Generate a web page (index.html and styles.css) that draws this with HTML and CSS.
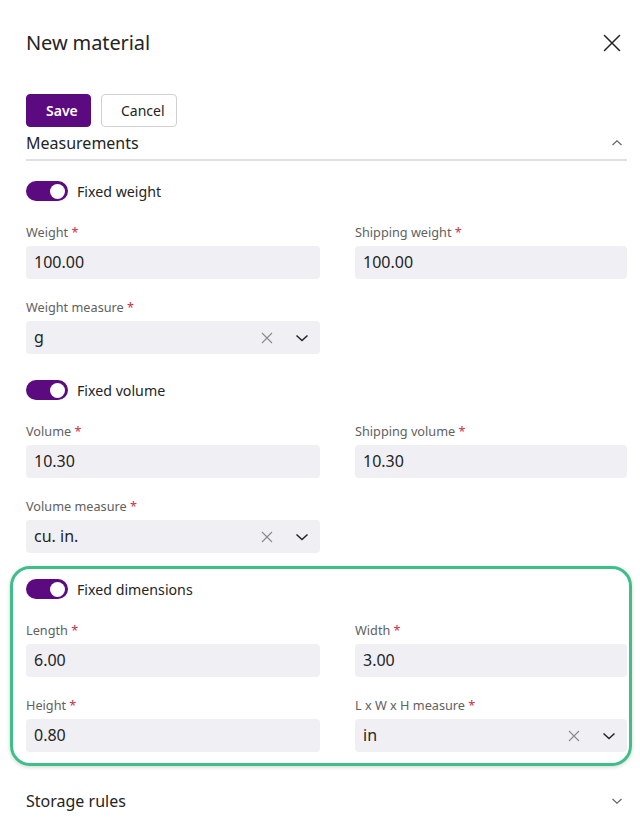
FILE: index.html
```html
<!DOCTYPE html>
<html>
<head>
<meta charset="utf-8">
<link rel="stylesheet" href="styles.css">
</head>
<body>
<div class="page">
  <header class="header">
    <h1 class="title">New material</h1>
    <svg class="close" width="18" height="18" viewBox="0 0 18 18"><path d="M1.5 1.5 L16.5 16.5 M16.5 1.5 L1.5 16.5" stroke="#242424" stroke-width="1.5" fill="none" stroke-linecap="round"/></svg>
  </header>
  <div class="actions">
    <button class="btn primary">Save</button>
    <button class="btn">Cancel</button>
  </div>
  <div class="section-head open">
    <span>Measurements</span>
    <svg width="12" height="8" viewBox="0 0 12 8"><path d="M1.5 6 L6 1.8 L10.5 6" stroke="#616161" stroke-width="1.1" fill="none"/></svg>
  </div>

  <div class="group">
    <div class="switch-row"><span class="switch"><span class="knob"></span></span><span>Fixed weight</span></div>
    <div class="grid">
      <div class="field"><label>Weight <b>*</b></label><div class="input">100.00</div></div>
      <div class="field"><label>Shipping weight <b>*</b></label><div class="input">100.00</div></div>
      <div class="field"><label>Weight measure <b>*</b></label><div class="input select"><span class="val">g</span>
        <svg class="x" width="12" height="12" viewBox="0 0 12 12"><path d="M1 1 L11 11 M11 1 L1 11" stroke="#8a8a8a" stroke-width="1.1"/></svg>
        <svg class="chev" width="14" height="8" viewBox="0 0 14 8"><path d="M1.5 1.5 L7 6.5 L12.5 1.5" stroke="#242424" stroke-width="1.5" fill="none"/></svg></div></div>
    </div>
  </div>

  <div class="group">
    <div class="switch-row"><span class="switch"><span class="knob"></span></span><span>Fixed volume</span></div>
    <div class="grid">
      <div class="field"><label>Volume <b>*</b></label><div class="input">10.30</div></div>
      <div class="field"><label>Shipping volume <b>*</b></label><div class="input">10.30</div></div>
      <div class="field"><label>Volume measure <b>*</b></label><div class="input select"><span class="val">cu. in.</span>
        <svg class="x" width="12" height="12" viewBox="0 0 12 12"><path d="M1 1 L11 11 M11 1 L1 11" stroke="#8a8a8a" stroke-width="1.1"/></svg>
        <svg class="chev" width="14" height="8" viewBox="0 0 14 8"><path d="M1.5 1.5 L7 6.5 L12.5 1.5" stroke="#242424" stroke-width="1.5" fill="none"/></svg></div></div>
    </div>
  </div>

  <div class="group highlight">
    <div class="switch-row"><span class="switch"><span class="knob"></span></span><span>Fixed dimensions</span></div>
    <div class="grid">
      <div class="field"><label>Length <b>*</b></label><div class="input">6.00</div></div>
      <div class="field"><label>Width <b>*</b></label><div class="input">3.00</div></div>
      <div class="field"><label>Height <b>*</b></label><div class="input">0.80</div></div>
      <div class="field"><label>L x W x H measure <b>*</b></label><div class="input select"><span class="val">in</span>
        <svg class="x" width="12" height="12" viewBox="0 0 12 12"><path d="M1 1 L11 11 M11 1 L1 11" stroke="#8a8a8a" stroke-width="1.1"/></svg>
        <svg class="chev" width="14" height="8" viewBox="0 0 14 8"><path d="M1.5 1.5 L7 6.5 L12.5 1.5" stroke="#242424" stroke-width="1.5" fill="none"/></svg></div></div>
    </div>
  </div>

  <div class="section-head closed">
    <span>Storage rules</span>
    <svg width="12" height="8" viewBox="0 0 12 8"><path d="M1.5 2 L6 6.2 L10.5 2" stroke="#616161" stroke-width="1.1" fill="none"/></svg>
  </div>
</div>
</body>
</html>
```
FILE: styles.css
```css
* { box-sizing: border-box; }
html, body { margin: 0; padding: 0; background: #fff; }
body {
  font-family: "Noto Sans", "Open Sans", sans-serif;
  color: #242424;
}
.page { padding: 0 13px 0 26px; width: 640px; }
.header {
  display: flex;
  justify-content: space-between;
  align-items: center;
  padding-top: 28px;
  height: 58px;
}
.title {
  margin: 0;
  font-size: 20px;
  font-weight: 400;
  line-height: 30px;
  letter-spacing: -0.1px;
}
.close { margin-right: 6px; }
.actions {
  display: flex;
  gap: 10px;
  margin-top: 36px;
}
.btn {
  font-family: inherit;
  font-size: 14px;
  height: 33px;
  border-radius: 4px;
  border: 1px solid #d1d1d1;
  background: #fff;
  color: #242424;
  padding: 0 19px;
  line-height: 31px;
}
.btn.primary {
  background: #5c0a80;
  border-color: #5c0a80;
  color: #fff;
  font-weight: 600;
  padding: 0 19px;
  width: 65px;
}
.btn:not(.primary) { width: 76px; }
.section-head {
  display: flex;
  justify-content: space-between;
  align-items: center;
  font-size: 16px;
  height: 28px;
  margin-top: 4px;
}
.section-head svg { margin-right: 4px; }
.section-head.open {
  border-bottom: 2px solid #e0e0e0;
  padding-bottom: 4px;
  height: 30px;
}
.section-head.closed { margin-top: 21px; }
.group { padding-top: 20px; }
.group + .group { padding-top: 26px; }
.switch-row {
  display: flex;
  align-items: center;
  gap: 9px;
  font-size: 14.2px;
  height: 20px;
}
.switch {
  width: 42px;
  height: 20px;
  border-radius: 10px;
  background: #5c0a80;
  display: flex;
  align-items: center;
  justify-content: flex-end;
  padding-right: 3px;
}
.knob {
  width: 15px;
  height: 15px;
  border-radius: 50%;
  background: #fff;
}
.grid {
  display: grid;
  grid-template-columns: 294px 272px;
  column-gap: 35px;
  row-gap: 19px;
  margin-top: 22px;
}
.field label {
  display: block;
  font-size: 12.7px;
  line-height: 18px;
  color: #616161;
  margin-bottom: 5px;
}
.field label b { color: #c4314b; font-weight: 400; }
.input {
  height: 33px;
  border-radius: 4px;
  background: #f0f0f4;
  font-size: 16px;
  line-height: 33px;
  padding: 0 8px;
  display: flex;
  align-items: center;
}
.select .val { flex: 1; }
.select .x { margin-right: 22px; }
.select .chev { margin-right: 3px; }
.group.highlight {
  margin: 13px -5px 0 -16px;
  padding: 10px 2px 11px 13px;
  border: 3px solid #3dbf8a;
  border-radius: 20px;
  box-shadow: 0 1px 4px rgba(0,0,0,0.18);
}
```
